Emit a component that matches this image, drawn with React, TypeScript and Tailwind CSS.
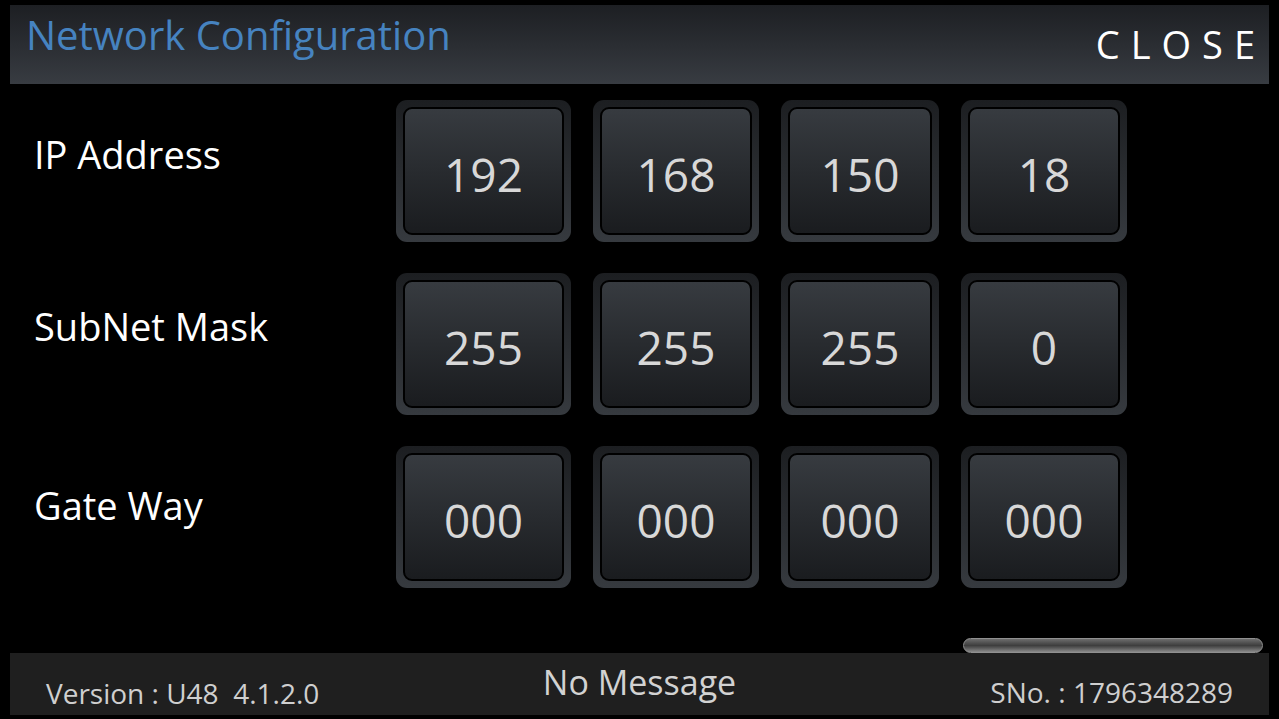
import React from "react";

const rows = [
  { label: "IP Address", values: ["192", "168", "150", "18"], labelPad: "pt-[35px]" },
  { label: "SubNet Mask", values: ["255", "255", "255", "0"], labelPad: "pt-[34px]" },
  { label: "Gate Way", values: ["000", "000", "000", "000"], labelPad: "pt-[40px]" },
];

const boxWidths = ["w-[175px]", "w-[166px]", "w-[158px]", "w-[166px]"];

function OctetBox({ value, width }: { value: string; width: string }) {
  return (
    <div
      className={`${width} h-full rounded-[11px] bg-gradient-to-b from-[#1c1e21] to-[#363a3f] p-[7px]`}
    >
      <div className="flex h-full items-center justify-center rounded-[9px] border-2 border-black bg-gradient-to-b from-[#373b40] to-[#1a1c1f] pt-[6px]">
        <span className="text-[46px] leading-none text-[#d8d8d8]">{value}</span>
      </div>
    </div>
  );
}

export default function App() {
  return (
    <div
      className="flex h-[719px] w-[1279px] flex-col overflow-hidden bg-black"
      style={{ fontFamily: '"Open Sans", "Noto Sans", sans-serif' }}
    >
      {/* header */}
      <div className="mx-[10px] mt-[5px] flex h-[79px] shrink-0 items-start justify-between bg-gradient-to-b from-[#1d1f23] to-[#383c42]">
        <div className="pl-[16px] pt-[10px] text-[40px] leading-none text-[#4683c0]">
          Network Configuration
        </div>
        <div className="pr-[3px] pt-[20px] text-[38px] leading-none tracking-[11px] text-white">
          CLOSE
        </div>
      </div>

      {/* address rows */}
      <div className="flex flex-col gap-[31px] pt-[16px]">
        {rows.map((row) => (
          <div key={row.label} className="flex h-[142px]">
            <div
              className={`w-[396px] shrink-0 pl-[34px] ${row.labelPad} text-[38px] leading-none text-white`}
            >
              {row.label}
            </div>
            <div className="flex gap-[22px]">
              {row.values.map((v, i) => (
                <OctetBox key={i} value={v} width={boxWidths[i]} />
              ))}
            </div>
          </div>
        ))}
      </div>

      {/* slider pill */}
      <div className="mt-auto flex justify-end pr-[16px]">
        <div className="h-[15px] w-[300px] rounded-full border border-[#909090] bg-gradient-to-b from-[#6e6e6e] via-[#3e3e3e] to-[#8a8a8a]" />
      </div>

      {/* footer */}
      <div className="mx-[10px] mb-[4px] grid h-[62px] shrink-0 grid-cols-3 items-start bg-[#1f1f1f] px-[36px]">
        <div className="pt-[26px] text-[28px] leading-none whitespace-pre text-[#cfcfcf]">
          Version : U48  4.1.2.0
        </div>
        <div className="pt-[12px] text-center text-[34px] leading-none whitespace-nowrap text-[#d2d2d2]">
          No Message
        </div>
        <div className="pt-[25px] text-right text-[28px] leading-none whitespace-nowrap text-[#cfcfcf]">
          SNo. : 1796348289
        </div>
      </div>
    </div>
  );
}
